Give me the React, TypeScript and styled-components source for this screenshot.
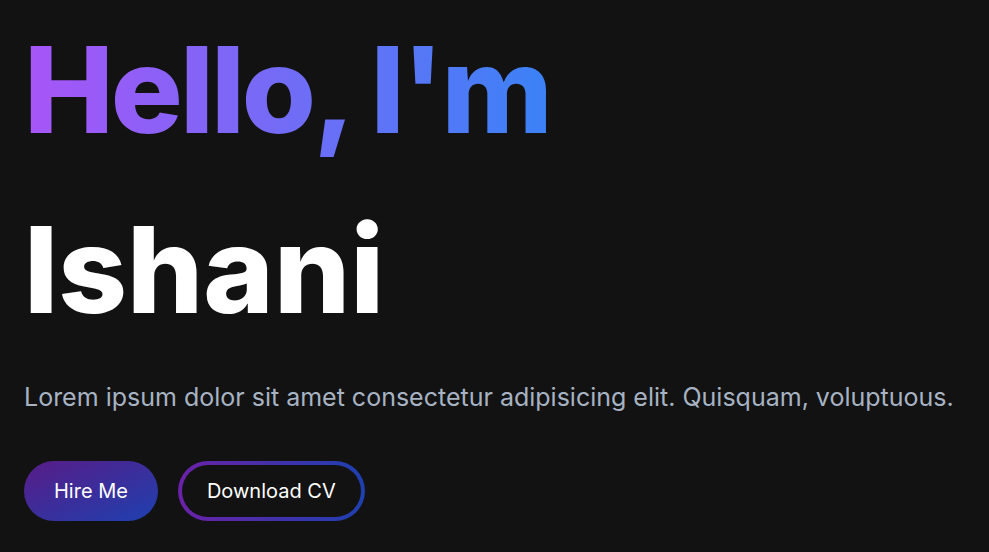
import React from 'react';
import styled, { createGlobalStyle } from 'styled-components';

const GlobalStyle = createGlobalStyle`
  html, body {
    margin: 0;
    padding: 0;
    background: #121212;
  }
  body {
    font-family: Inter, 'Noto Sans', sans-serif;
  }
`;

const Hero = styled.section`
  min-height: 552px;
  box-sizing: border-box;
  padding: 0 24px;
  background: #121212;
  color: #ffffff;
  display: flex;
  flex-direction: column;
`;

const Title = styled.h1`
  margin: 0;
  font-family: Inter, sans-serif;
  font-weight: 800;
  font-size: 120px;
  line-height: 180px;
  color: #ffffff;
`;

const Greeting = styled.span`
  letter-spacing: -0.025em;
  background: linear-gradient(to right, #a855f7, #3b82f6);
  -webkit-background-clip: text;
  background-clip: text;
  color: transparent;
`;

const Lead = styled.p`
  margin: 19px 0 0;
  font-size: 25px;
  line-height: 37.5px;
  color: #a7b3c2;
`;

const Actions = styled.div`
  display: flex;
  gap: 20px;
  margin-top: 44px;
`;

const Button = styled.button<{ outline?: boolean }>`
  height: 60px;
  box-sizing: border-box;
  padding: 0 ${({ outline }) => (outline ? '25px' : '30px')};
  border-radius: 999px;
  font-family: Inter, sans-serif;
  font-size: 20px;
  color: #ffffff;
  cursor: pointer;
  border: ${({ outline }) => (outline ? '4px solid transparent' : 'none')};
  background: ${({ outline }) =>
    outline
      ? 'linear-gradient(#121212, #121212) padding-box, linear-gradient(to right, #6b21a8, #1e40af) border-box'
      : 'linear-gradient(to bottom right, #581c87, #1e40af)'};
`;

export default function App() {
  return (
    <>
      <GlobalStyle />
      <Hero>
        <Title>
          <Greeting>Hello, I'm</Greeting>
          <br />
          Ishani
        </Title>
        <Lead>
          Lorem ipsum dolor sit amet consectetur adipisicing elit. Quisquam,
          voluptuous.
        </Lead>
        <Actions>
          <Button>Hire Me</Button>
          <Button outline>Download CV</Button>
        </Actions>
      </Hero>
    </>
  );
}
